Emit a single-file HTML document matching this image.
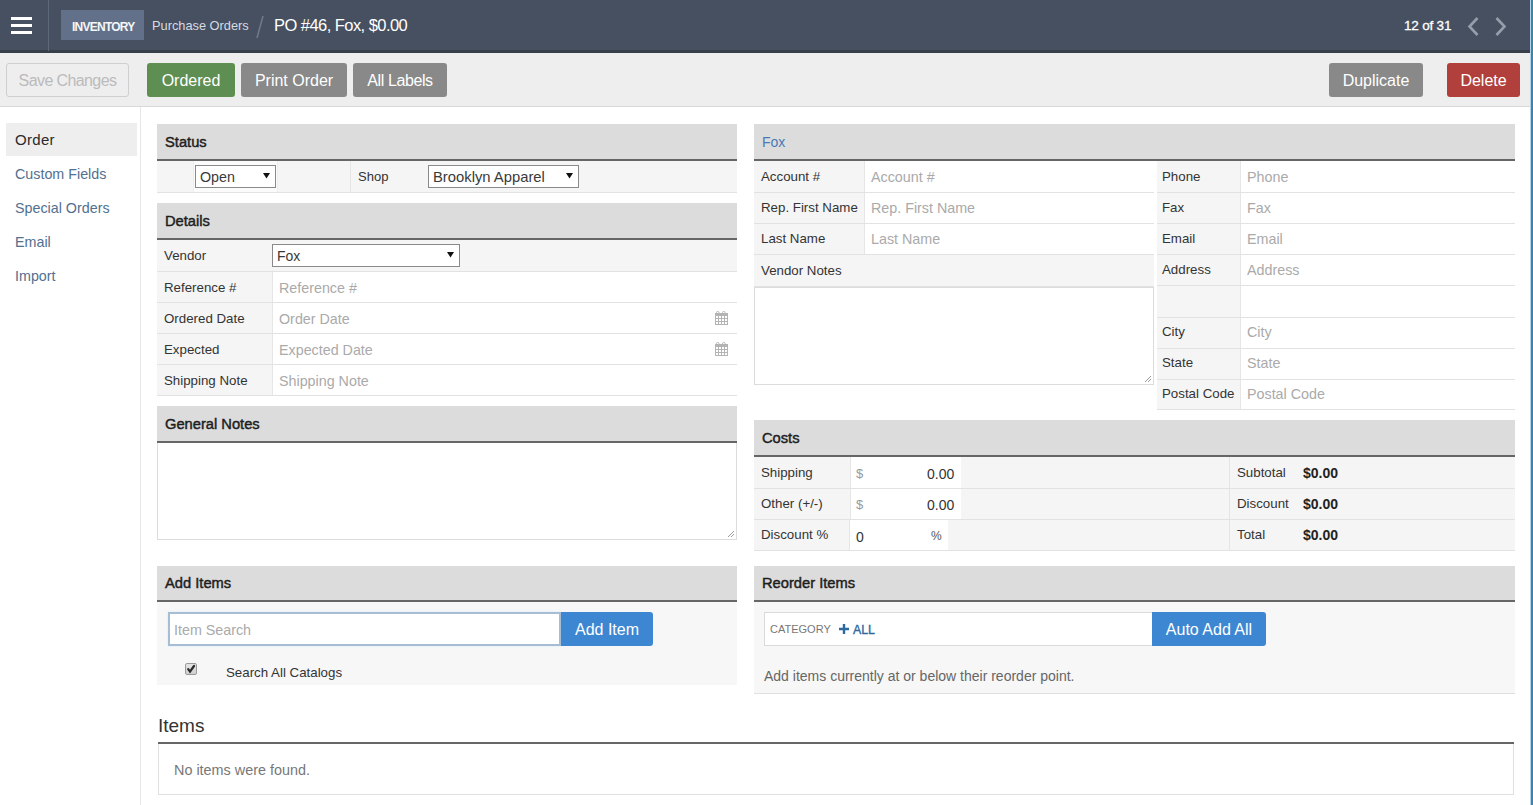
<!DOCTYPE html>
<html><head><meta charset="utf-8">
<style>
*{box-sizing:border-box;margin:0;padding:0}
html,body{width:1533px;height:805px;overflow:hidden;background:#fff;font-family:"Liberation Sans",sans-serif;color:#333}
.a{position:absolute}
.t{position:absolute;white-space:nowrap;line-height:1}
#hdr{left:0;top:0;width:1530px;height:53px;background:#465060;border-bottom:3px solid #373f4b}
#rb{left:1530px;top:0;width:3px;height:805px;background:#3c84ab;border-left:1px solid #b0d3ea}
.hb{left:11px;width:21px;height:3px;background:#fff}
#tb{left:0;top:53px;width:1530px;height:54px;background:#eeeeee;border-bottom:1px solid #d8d8d8}
.btn{position:absolute;height:34px;border-radius:3px;color:#fff;font-size:16px;text-align:center;line-height:35px;white-space:nowrap}
.sh{position:absolute;height:37px;background:#dcdcdc;border-bottom:2px solid #666}
.sht{position:absolute;font-size:14.7px;font-weight:400;color:#1e1e1e;-webkit-text-stroke:0.45px #1e1e1e;line-height:1;white-space:nowrap}
.row{position:absolute;background:#f5f5f5;border-bottom:1px solid #e2e2e2}
.lbl{position:absolute;font-size:13.3px;color:#333;line-height:1;white-space:nowrap}
.inp{position:absolute;background:#fff;border-left:1px solid #e6e6e6}
.ph{position:absolute;font-size:14.3px;color:#aaa;line-height:1;white-space:nowrap}
.sel{position:absolute;background:#fff;border:1px solid #8a8a8a;}
.nav{position:absolute;left:15px;font-size:14.3px;color:#52708f;line-height:1;white-space:nowrap}
</style></head><body>
<!-- header -->
<div id="hdr" class="a"></div>
<div class="a hb" style="top:17px"></div>
<div class="a hb" style="top:24px"></div>
<div class="a hb" style="top:31px"></div>
<div class="a" style="left:48px;top:0;width:1px;height:51px;background:#5d6878"></div>
<div class="a" style="left:61px;top:10px;width:83px;height:30px;background:#627189"></div>
<div class="t" style="left:72px;top:21px;font-size:12px;font-weight:700;color:#f4f6f8;letter-spacing:-0.75px">INVENTORY</div>
<div class="t" style="left:152px;top:20px;font-size:12.8px;color:#d6dbe2">Purchase Orders</div>
<svg class="a" style="left:255px;top:15px" width="10" height="24" viewBox="0 0 10 24"><path d="M8 1L2 23" stroke="#6e7888" stroke-width="1.6"/></svg>
<div class="t" style="left:274px;top:17px;font-size:16.5px;letter-spacing:-0.55px;color:#fff">PO #46, Fox, $0.00</div>
<div class="t" style="left:1404px;top:19px;font-size:13.5px;color:#fff;letter-spacing:-0.2px;-webkit-text-stroke:0.3px #fff">12 of 31</div>
<svg class="a" style="left:1465px;top:16px" width="16" height="22" viewBox="0 0 16 22"><path d="M12.5 2 L4.5 10.5 L12.5 19" fill="none" stroke="#959eaa" stroke-width="2.6"/></svg>
<svg class="a" style="left:1493px;top:16px" width="16" height="22" viewBox="0 0 16 22"><path d="M3.5 2 L11.5 10.5 L3.5 19" fill="none" stroke="#959eaa" stroke-width="2.6"/></svg>
<div id="rb" class="a"></div>

<!-- toolbar -->
<div id="tb" class="a"></div>
<div class="btn" style="left:6px;top:63px;width:123px;background:#eeeeee;border:1px solid #cfcfcf;color:#bbb;line-height:33px;letter-spacing:-0.6px">Save Changes</div>
<div class="btn" style="left:147px;top:63px;width:88px;background:#5f8e52">Ordered</div>
<div class="btn" style="left:241px;top:63px;width:106px;background:#898989">Print Order</div>
<div class="btn" style="left:353px;top:63px;width:94px;background:#898989;letter-spacing:-0.4px">All Labels</div>
<div class="btn" style="left:1329px;top:63px;width:94px;background:#898989">Duplicate</div>
<div class="btn" style="left:1447px;top:63px;width:73px;background:#b1403c">Delete</div>

<!-- sidebar -->
<div class="a" style="left:140px;top:107px;width:1px;height:698px;background:#e6e6e6"></div>
<div class="a" style="left:6px;top:123px;width:131px;height:33px;background:#eeeeee"></div>
<div class="t" style="left:15px;top:132px;font-size:15px;color:#2a2a2a;letter-spacing:0.3px">Order</div>
<div class="nav" style="top:167px">Custom Fields</div>
<div class="nav" style="top:201px">Special Orders</div>
<div class="nav" style="top:235px">Email</div>
<div class="nav" style="top:269px">Import</div>


<!-- LEFT COLUMN -->
<!-- Status -->
<div class="sh" style="left:157px;top:124px;width:580px;height:37px"></div>
<div class="sht" style="left:165px;top:135px">Status</div>
<div class="row" style="left:157px;top:161px;width:580px;height:32px"></div>
<div class="a" style="left:350px;top:161px;width:1px;height:31px;background:#e6e6e6"></div>
<div class="a" style="left:193px;top:161px;width:85px;height:31px;background:#fbfbfb;border-left:1px solid #eee;border-right:1px solid #eee"></div>
<div class="sel" style="left:195px;top:165px;width:81px;height:23px"></div>
<div class="t" style="left:200px;top:170px;font-size:14.3px;color:#3a3a3a">Open</div>
<svg class="a" style="left:263px;top:173px" width="7" height="6" viewBox="0 0 7 6"><path d="M0 0H7L3.5 5.5Z" fill="#111"/></svg>
<div class="t" style="left:358px;top:170px;font-size:13px;color:#333">Shop</div>
<div class="sel" style="left:428px;top:165px;width:151px;height:23px"></div>
<div class="t" style="left:433px;top:170px;font-size:14.8px;color:#3a3a3a">Brooklyn Apparel</div>
<svg class="a" style="left:566px;top:173px" width="7" height="6" viewBox="0 0 7 6"><path d="M0 0H7L3.5 5.5Z" fill="#111"/></svg>

<!-- Details -->
<div class="sh" style="left:157px;top:203px;width:580px;height:37px"></div>
<div class="sht" style="left:165px;top:214px">Details</div>
<div class="row" style="left:157px;top:240px;width:580px;height:32px"></div>
<div class="lbl" style="left:164px;top:249px">Vendor</div>
<div class="sel" style="left:272px;top:244px;width:188px;height:23px"></div>
<div class="t" style="left:277px;top:249px;font-size:14px;color:#3a3a3a">Fox</div>
<svg class="a" style="left:447px;top:252px" width="7" height="6" viewBox="0 0 7 6"><path d="M0 0H7L3.5 5.5Z" fill="#111"/></svg>

<div class="row" style="left:157px;top:272px;width:580px;height:31px"></div>
<div class="inp" style="left:272px;top:272px;width:465px;height:30px"></div>
<div class="lbl" style="left:164px;top:281px">Reference #</div>
<div class="ph" style="left:279px;top:281px">Reference #</div>

<div class="row" style="left:157px;top:303px;width:580px;height:31px"></div>
<div class="inp" style="left:272px;top:303px;width:465px;height:30px"></div>
<div class="lbl" style="left:164px;top:312px">Ordered Date</div>
<div class="ph" style="left:279px;top:312px">Order Date</div>
<svg class="a" style="left:714px;top:311px" width="15" height="15" viewBox="0 0 15 15"><g fill="none" stroke="#b4b4b4" stroke-width="1"><path d="M2.5 2.5V1.5Q2.5 0.5 3.5 0.5H4Q5 0.5 5 1.5V2.5M8.5 2.5V1.5Q8.5 0.5 9.5 0.5H10Q11 0.5 11 1.5V2.5"/><path d="M1.5 4V14M4.5 4V14M7.5 4V14M10.5 4V14M13.5 4V14M1 7.5H14M1 10.5H14M1 13.5H14"/></g><rect x="1" y="2" width="13" height="3" fill="#b4b4b4"/></svg>

<div class="row" style="left:157px;top:334px;width:580px;height:31px"></div>
<div class="inp" style="left:272px;top:334px;width:465px;height:30px"></div>
<div class="lbl" style="left:164px;top:343px">Expected</div>
<div class="ph" style="left:279px;top:343px">Expected Date</div>
<svg class="a" style="left:714px;top:342px" width="15" height="15" viewBox="0 0 15 15"><g fill="none" stroke="#b4b4b4" stroke-width="1"><path d="M2.5 2.5V1.5Q2.5 0.5 3.5 0.5H4Q5 0.5 5 1.5V2.5M8.5 2.5V1.5Q8.5 0.5 9.5 0.5H10Q11 0.5 11 1.5V2.5"/><path d="M1.5 4V14M4.5 4V14M7.5 4V14M10.5 4V14M13.5 4V14M1 7.5H14M1 10.5H14M1 13.5H14"/></g><rect x="1" y="2" width="13" height="3" fill="#b4b4b4"/></svg>

<div class="row" style="left:157px;top:365px;width:580px;height:31px"></div>
<div class="inp" style="left:272px;top:365px;width:465px;height:30px"></div>
<div class="lbl" style="left:164px;top:374px">Shipping Note</div>
<div class="ph" style="left:279px;top:374px">Shipping Note</div>

<!-- General Notes -->
<div class="sh" style="left:157px;top:406px;width:580px;height:37px"></div>
<div class="sht" style="left:165px;top:417px">General Notes</div>
<div class="a" style="left:157px;top:443px;width:580px;height:97px;background:#fff;border:1px solid #dcdcdc;border-top:0"></div>
<svg class="a" style="left:727px;top:530px" width="8" height="8" viewBox="0 0 8 8"><path d="M7 1L1 7M7 4L4 7" stroke="#999" stroke-width="1"/></svg>

<!-- Add Items -->
<div class="sh" style="left:157px;top:566px;width:580px;height:36px"></div>
<div class="sht" style="left:165px;top:576px">Add Items</div>
<div class="a" style="left:157px;top:602px;width:580px;height:83px;background:#f7f7f7"></div>
<div class="a" style="left:168px;top:612px;width:393px;height:34px;background:#fff;border:2px solid #a6bdd3;box-shadow:0 0 2px #d6ecfb"></div>
<div class="ph" style="left:174px;top:623px">Item Search</div>
<div class="btn" style="left:561px;top:612px;width:92px;background:#3d87d2;border-radius:0 3px 3px 0">Add Item</div>
<div class="a" style="left:185px;top:663px;width:12px;height:12px;background:linear-gradient(#e6e6e6,#d0d0d0);border:1px solid #9a9a9a;border-radius:2px"></div>
<svg class="a" style="left:185px;top:663px" width="12" height="12" viewBox="0 0 12 12"><path d="M3.2 6.2 L5 8.6 L9 3" fill="none" stroke="#2a2a2a" stroke-width="2.2" stroke-linecap="round"/></svg>
<div class="lbl" style="left:226px;top:666px">Search All Catalogs</div>

<!-- RIGHT COLUMN -->
<div class="sh" style="left:754px;top:124px;width:761px;height:37px"></div>
<div class="t" style="left:762px;top:135px;font-size:14px;color:#4a79b6">Fox</div>

<div class="row" style="left:754px;top:161px;width:400px;height:32px"></div>
<div class="inp" style="left:864px;top:161px;width:290px;height:31px"></div>
<div class="lbl" style="left:761px;top:170px">Account #</div>
<div class="ph" style="left:871px;top:170px">Account #</div>
<div class="row" style="left:754px;top:193px;width:400px;height:31px"></div>
<div class="inp" style="left:864px;top:193px;width:290px;height:30px"></div>
<div class="lbl" style="left:761px;top:201px">Rep. First Name</div>
<div class="ph" style="left:871px;top:201px">Rep. First Name</div>
<div class="row" style="left:754px;top:224px;width:400px;height:31px"></div>
<div class="inp" style="left:864px;top:224px;width:290px;height:30px"></div>
<div class="lbl" style="left:761px;top:232px">Last Name</div>
<div class="ph" style="left:871px;top:232px">Last Name</div>
<div class="row" style="left:754px;top:255px;width:400px;height:32px"></div>
<div class="lbl" style="left:761px;top:264px">Vendor Notes</div>
<div class="a" style="left:754px;top:287px;width:400px;height:98px;background:#fff;border:1px solid #dcdcdc"></div>
<svg class="a" style="left:1144px;top:375px" width="8" height="8" viewBox="0 0 8 8"><path d="M7 1L1 7M7 4L4 7" stroke="#999" stroke-width="1"/></svg>

<div class="row" style="left:1157px;top:161px;width:358px;height:32px"></div>
<div class="inp" style="left:1240px;top:161px;width:275px;height:31px"></div>
<div class="lbl" style="left:1162px;top:170px">Phone</div>
<div class="ph" style="left:1247px;top:170px">Phone</div>
<div class="row" style="left:1157px;top:193px;width:358px;height:31px"></div>
<div class="inp" style="left:1240px;top:193px;width:275px;height:30px"></div>
<div class="lbl" style="left:1162px;top:201px">Fax</div>
<div class="ph" style="left:1247px;top:201px">Fax</div>
<div class="row" style="left:1157px;top:224px;width:358px;height:31px"></div>
<div class="inp" style="left:1240px;top:224px;width:275px;height:30px"></div>
<div class="lbl" style="left:1162px;top:232px">Email</div>
<div class="ph" style="left:1247px;top:232px">Email</div>
<div class="row" style="left:1157px;top:255px;width:358px;height:31px"></div>
<div class="inp" style="left:1240px;top:255px;width:275px;height:30px"></div>
<div class="lbl" style="left:1162px;top:263px">Address</div>
<div class="ph" style="left:1247px;top:263px">Address</div>
<div class="row" style="left:1157px;top:286px;width:358px;height:32px"></div>
<div class="inp" style="left:1240px;top:286px;width:275px;height:31px"></div>
<div class="row" style="left:1157px;top:318px;width:358px;height:31px"></div>
<div class="inp" style="left:1240px;top:318px;width:275px;height:30px"></div>
<div class="lbl" style="left:1162px;top:325px">City</div>
<div class="ph" style="left:1247px;top:325px">City</div>
<div class="row" style="left:1157px;top:349px;width:358px;height:31px"></div>
<div class="inp" style="left:1240px;top:349px;width:275px;height:30px"></div>
<div class="lbl" style="left:1162px;top:356px">State</div>
<div class="ph" style="left:1247px;top:356px">State</div>
<div class="row" style="left:1157px;top:380px;width:358px;height:30px"></div>
<div class="inp" style="left:1240px;top:380px;width:275px;height:29px"></div>
<div class="lbl" style="left:1162px;top:387px">Postal Code</div>
<div class="ph" style="left:1247px;top:387px">Postal Code</div>

<!-- Costs -->
<div class="sh" style="left:754px;top:420px;width:761px;height:37px"></div>
<div class="sht" style="left:762px;top:431px">Costs</div>
<div class="row" style="left:754px;top:457px;width:761px;height:32px"></div>
<div class="inp" style="left:850px;top:457px;width:111px;height:31px"></div>
<div class="a" style="left:1229px;top:457px;width:1px;height:31px;background:#e4e4e4"></div>
<div class="lbl" style="left:761px;top:466px">Shipping</div>
<div class="t" style="left:856px;top:467px;font-size:13px;color:#999">$</div>
<div class="t" style="left:927px;top:467px;font-size:14px;color:#333">0.00</div>
<div class="lbl" style="left:1237px;top:466px">Subtotal</div>
<div class="t" style="left:1303px;top:466px;font-size:14px;font-weight:700;color:#222">$0.00</div>
<div class="row" style="left:754px;top:489px;width:761px;height:31px"></div>
<div class="inp" style="left:850px;top:489px;width:111px;height:30px"></div>
<div class="a" style="left:1229px;top:489px;width:1px;height:30px;background:#e4e4e4"></div>
<div class="lbl" style="left:761px;top:497px">Other (+/-)</div>
<div class="t" style="left:856px;top:498px;font-size:13px;color:#999">$</div>
<div class="t" style="left:927px;top:498px;font-size:14px;color:#333">0.00</div>
<div class="lbl" style="left:1237px;top:497px">Discount</div>
<div class="t" style="left:1303px;top:497px;font-size:14px;font-weight:700;color:#222">$0.00</div>
<div class="row" style="left:754px;top:520px;width:761px;height:31px"></div>
<div class="inp" style="left:849px;top:520px;width:99px;height:30px"></div>
<div class="a" style="left:1229px;top:520px;width:1px;height:30px;background:#e4e4e4"></div>
<div class="lbl" style="left:761px;top:528px">Discount %</div>
<div class="t" style="left:856px;top:530px;font-size:14px;color:#333">0</div>
<div class="t" style="left:931px;top:530px;font-size:12px;color:#555">%</div>
<div class="lbl" style="left:1237px;top:528px">Total</div>
<div class="t" style="left:1303px;top:528px;font-size:14px;font-weight:700;color:#222">$0.00</div>

<!-- Reorder Items -->
<div class="sh" style="left:754px;top:566px;width:761px;height:36px"></div>
<div class="sht" style="left:762px;top:576px">Reorder Items</div>
<div class="a" style="left:754px;top:602px;width:761px;height:92px;background:#f7f7f7;border-bottom:1px solid #e0e0e0"></div>
<div class="a" style="left:764px;top:612px;width:389px;height:34px;background:#fff;border:1px solid #dadada"></div>
<div class="t" style="left:770px;top:624px;font-size:11px;color:#777">CATEGORY</div>
<svg class="a" style="left:839px;top:624px" width="10" height="10" viewBox="0 0 10 10"><path d="M5 0V10M0 5H10" stroke="#2a6aa0" stroke-width="2.4"/></svg>
<div class="t" style="left:853px;top:624px;font-size:12.3px;color:#2a6aa0;-webkit-text-stroke:0.35px #2a6aa0">ALL</div>
<div class="btn" style="left:1152px;top:612px;width:114px;background:#3d87d2;border-radius:0 3px 3px 0">Auto Add All</div>
<div class="t" style="left:764px;top:669px;font-size:14px;color:#666">Add items currently at or below their reorder point.</div>

<!-- Items -->
<div class="t" style="left:158px;top:716px;font-size:19px;color:#333">Items</div>
<div class="a" style="left:158px;top:742px;width:1356px;height:2px;background:#666"></div>
<div class="a" style="left:158px;top:744px;width:1356px;height:51px;border:1px solid #e0e0e0;border-top:0"></div>
<div class="t" style="left:174px;top:763px;font-size:14.4px;color:#777">No items were found.</div>

</body></html>
